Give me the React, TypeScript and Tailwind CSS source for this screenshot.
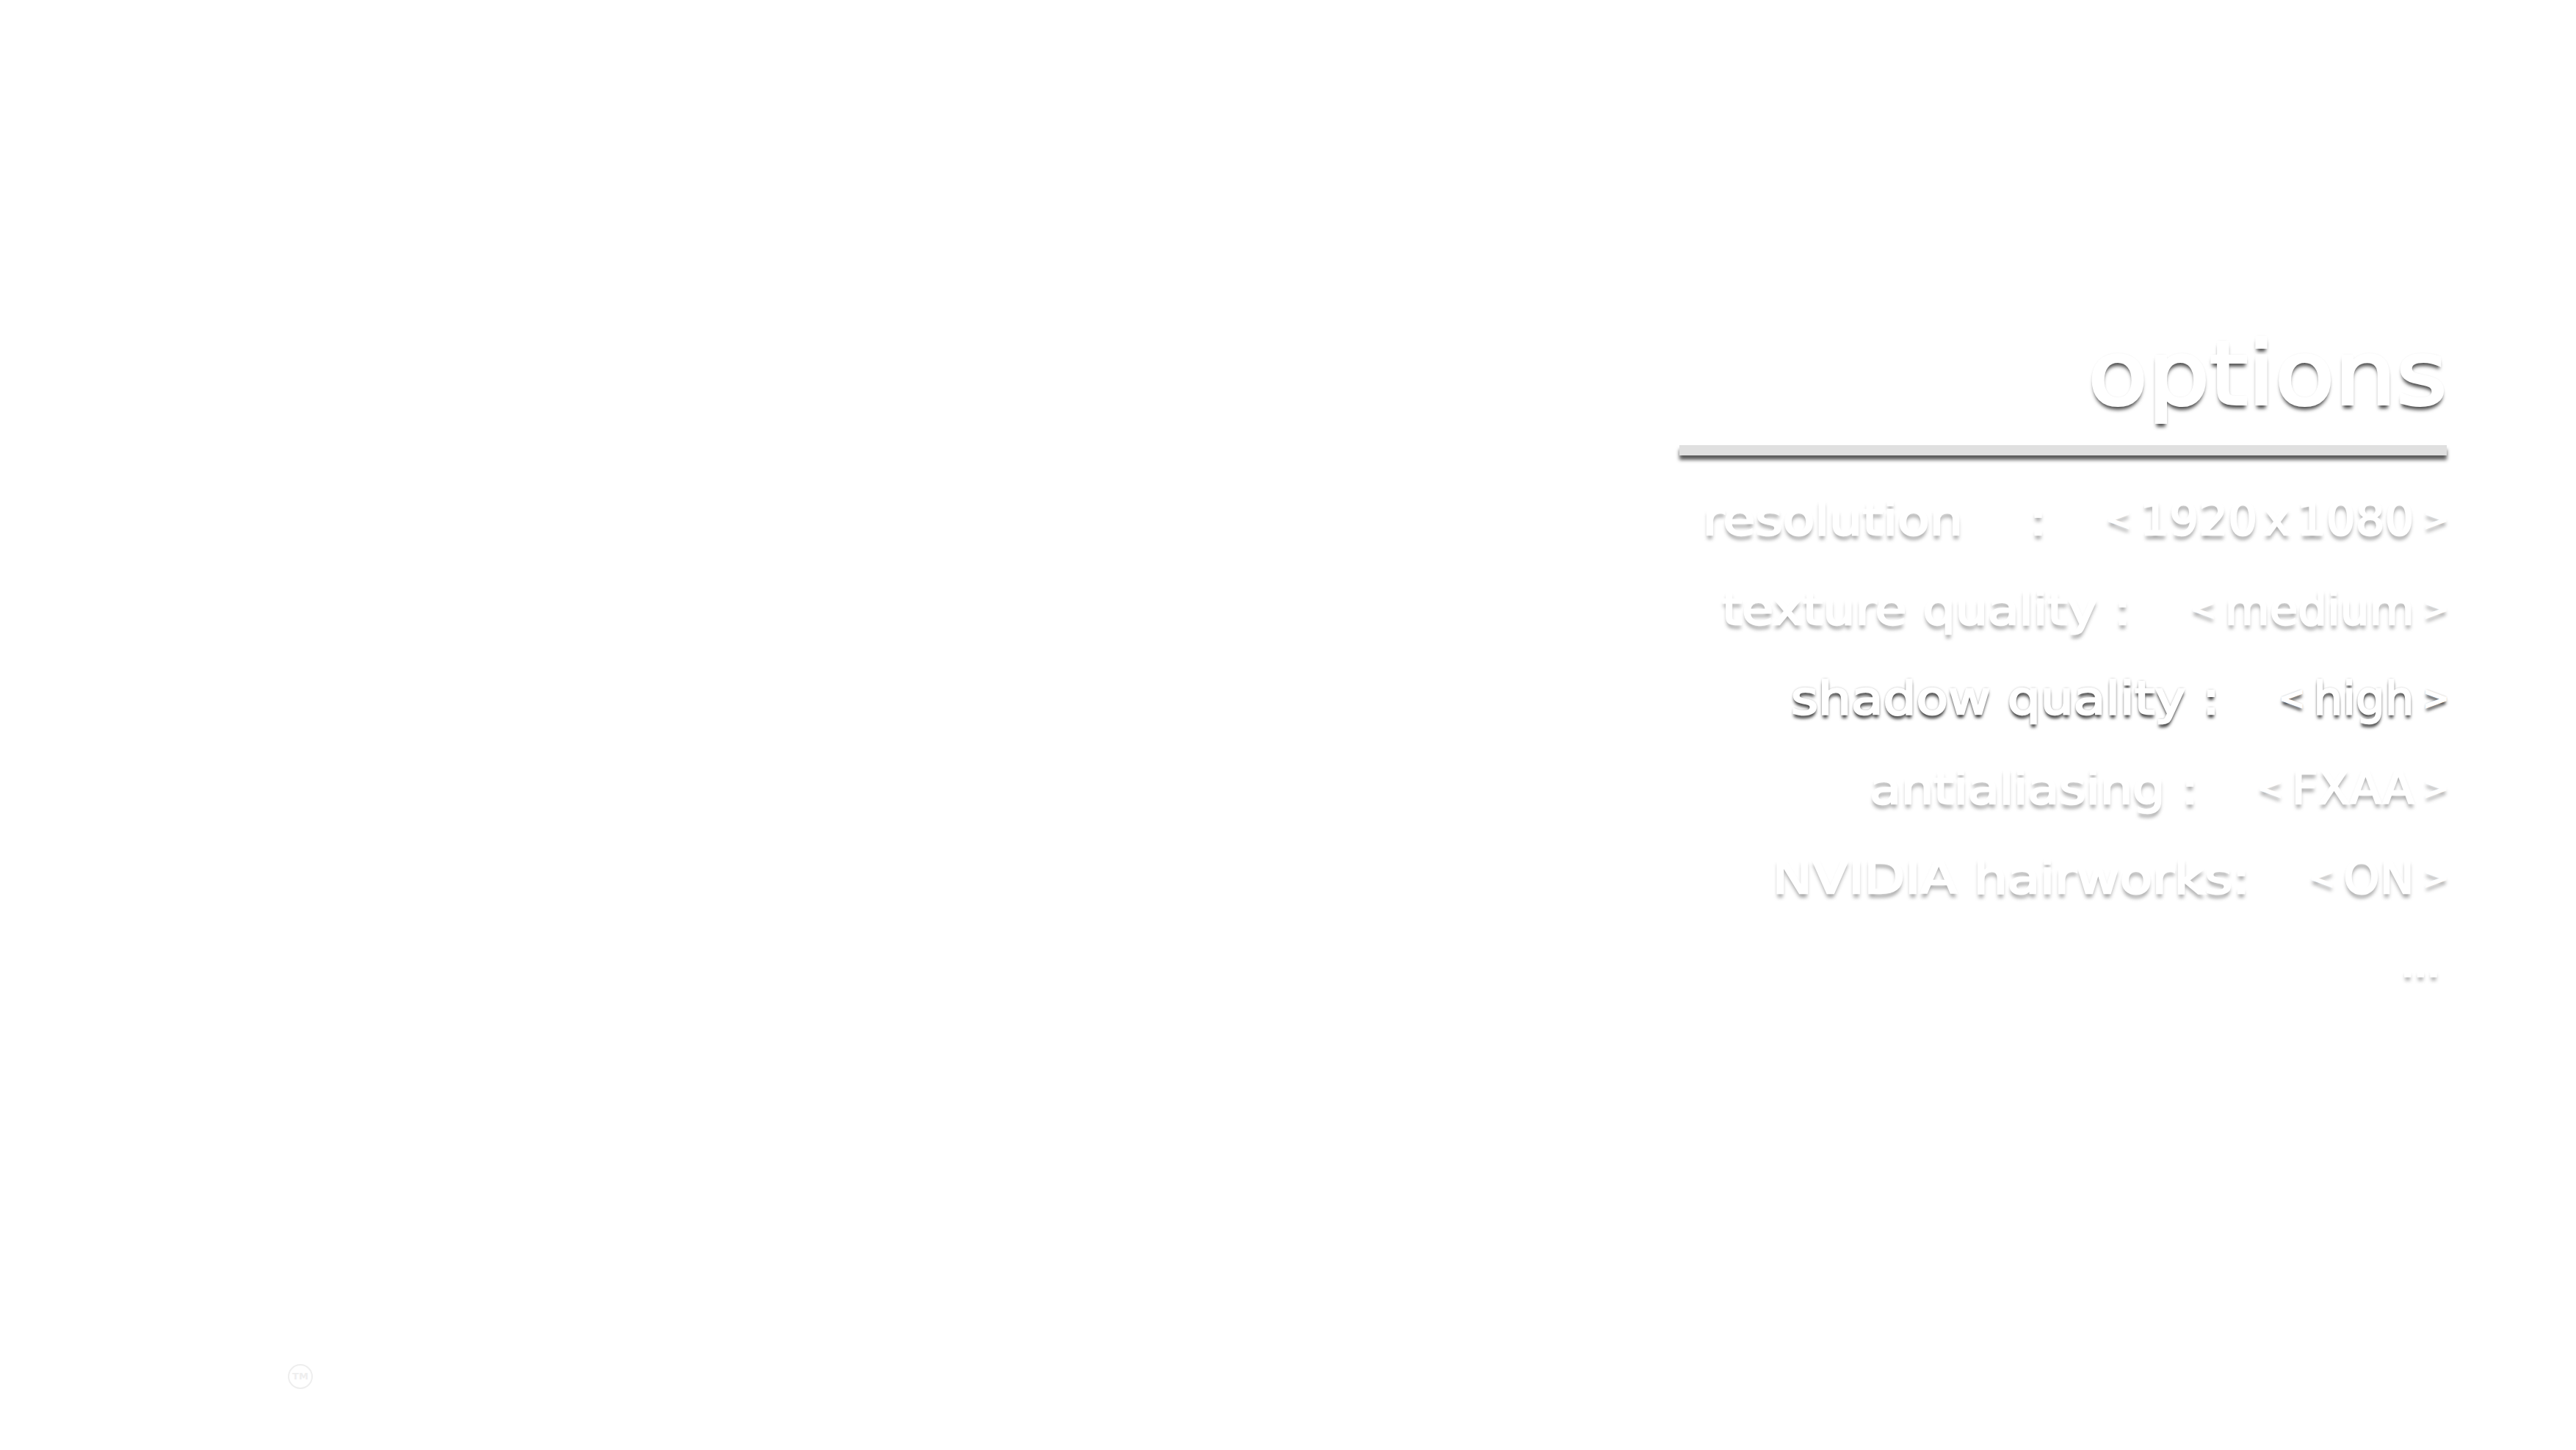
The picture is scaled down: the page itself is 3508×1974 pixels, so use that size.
const font = "font-['DejaVu_Sans',sans-serif]";

const rows = [
  { label: "resolution    :", value: "1920 x 1080", active: false, stretch: "scale-x-[1.15]" },
  { label: "texture quality :", value: "medium", active: false, stretch: "scale-x-[1.123]" },
  { label: "shadow quality :", value: "high", active: true, stretch: "scale-x-[1.145]" },
  { label: "antialiasing :", value: "FXAA", active: false, stretch: "scale-x-[1.125]" },
  { label: "NVIDIA hairworks:", value: "ON", active: false, stretch: "scale-x-[1.165]" },
];

function Row({
  label,
  value,
  active,
  stretch,
}: {
  label: string;
  value: string;
  active: boolean;
  stretch: string;
}) {
  return (
    <div
      className={`-mr-[3px] flex h-[122px] items-center justify-end gap-[80px] whitespace-pre text-[62px] leading-none text-white [-webkit-text-stroke:2.5px_white] ${
        active
          ? "[text-shadow:0_5px_4px_rgba(0,0,0,0.8),0_0_3px_rgba(0,0,0,0.7)]"
          : "[text-shadow:0_6px_5px_rgba(0,0,0,0.35)]"
      }`}
    >
      <span className={`origin-right ${stretch}`}>{label}</span>
      <span className="flex items-center gap-[12px]">
        <span className="text-[42px]">{"<"}</span>
        <span className="tracking-[0.5px] [word-spacing:-12px]">{value}</span>
        <span className="text-[42px]">{">"}</span>
      </span>
    </div>
  );
}

export default function App() {
  return (
    <div className={`relative flex h-[1974px] w-full justify-end bg-white pr-[176px] pt-[450px] ${font}`}>
      <div className="w-[1045px]">
        <h1 className="h-[156px] text-right text-[119px] font-normal leading-none text-white [-webkit-text-stroke:4px_white] [text-shadow:0_6px_5px_rgba(0,0,0,0.7),0_0_3px_rgba(0,0,0,0.4)]">
          <span className="inline-block origin-right scale-x-[1.115]">options</span>
        </h1>
        <div className="mb-[26px] h-[14px] bg-[#e0e0e0] shadow-[0_6px_5px_rgba(0,0,0,0.65)]" />
        {rows.map((row) => (
          <Row key={row.label} {...row} />
        ))}
        <div className="pr-[10px] text-right text-[62px] leading-[104px] tracking-[-2px] text-white [-webkit-text-stroke:3px_white] [text-shadow:0_6px_5px_rgba(0,0,0,0.35)]">
          ...
        </div>
      </div>
      <div className="absolute left-[392px] top-[1857px] flex h-[34px] w-[34px] items-center justify-center rounded-full border-2 border-[#eeeeee] text-[13px] font-bold text-[#eeeeee]">
        TM
      </div>
    </div>
  );
}
